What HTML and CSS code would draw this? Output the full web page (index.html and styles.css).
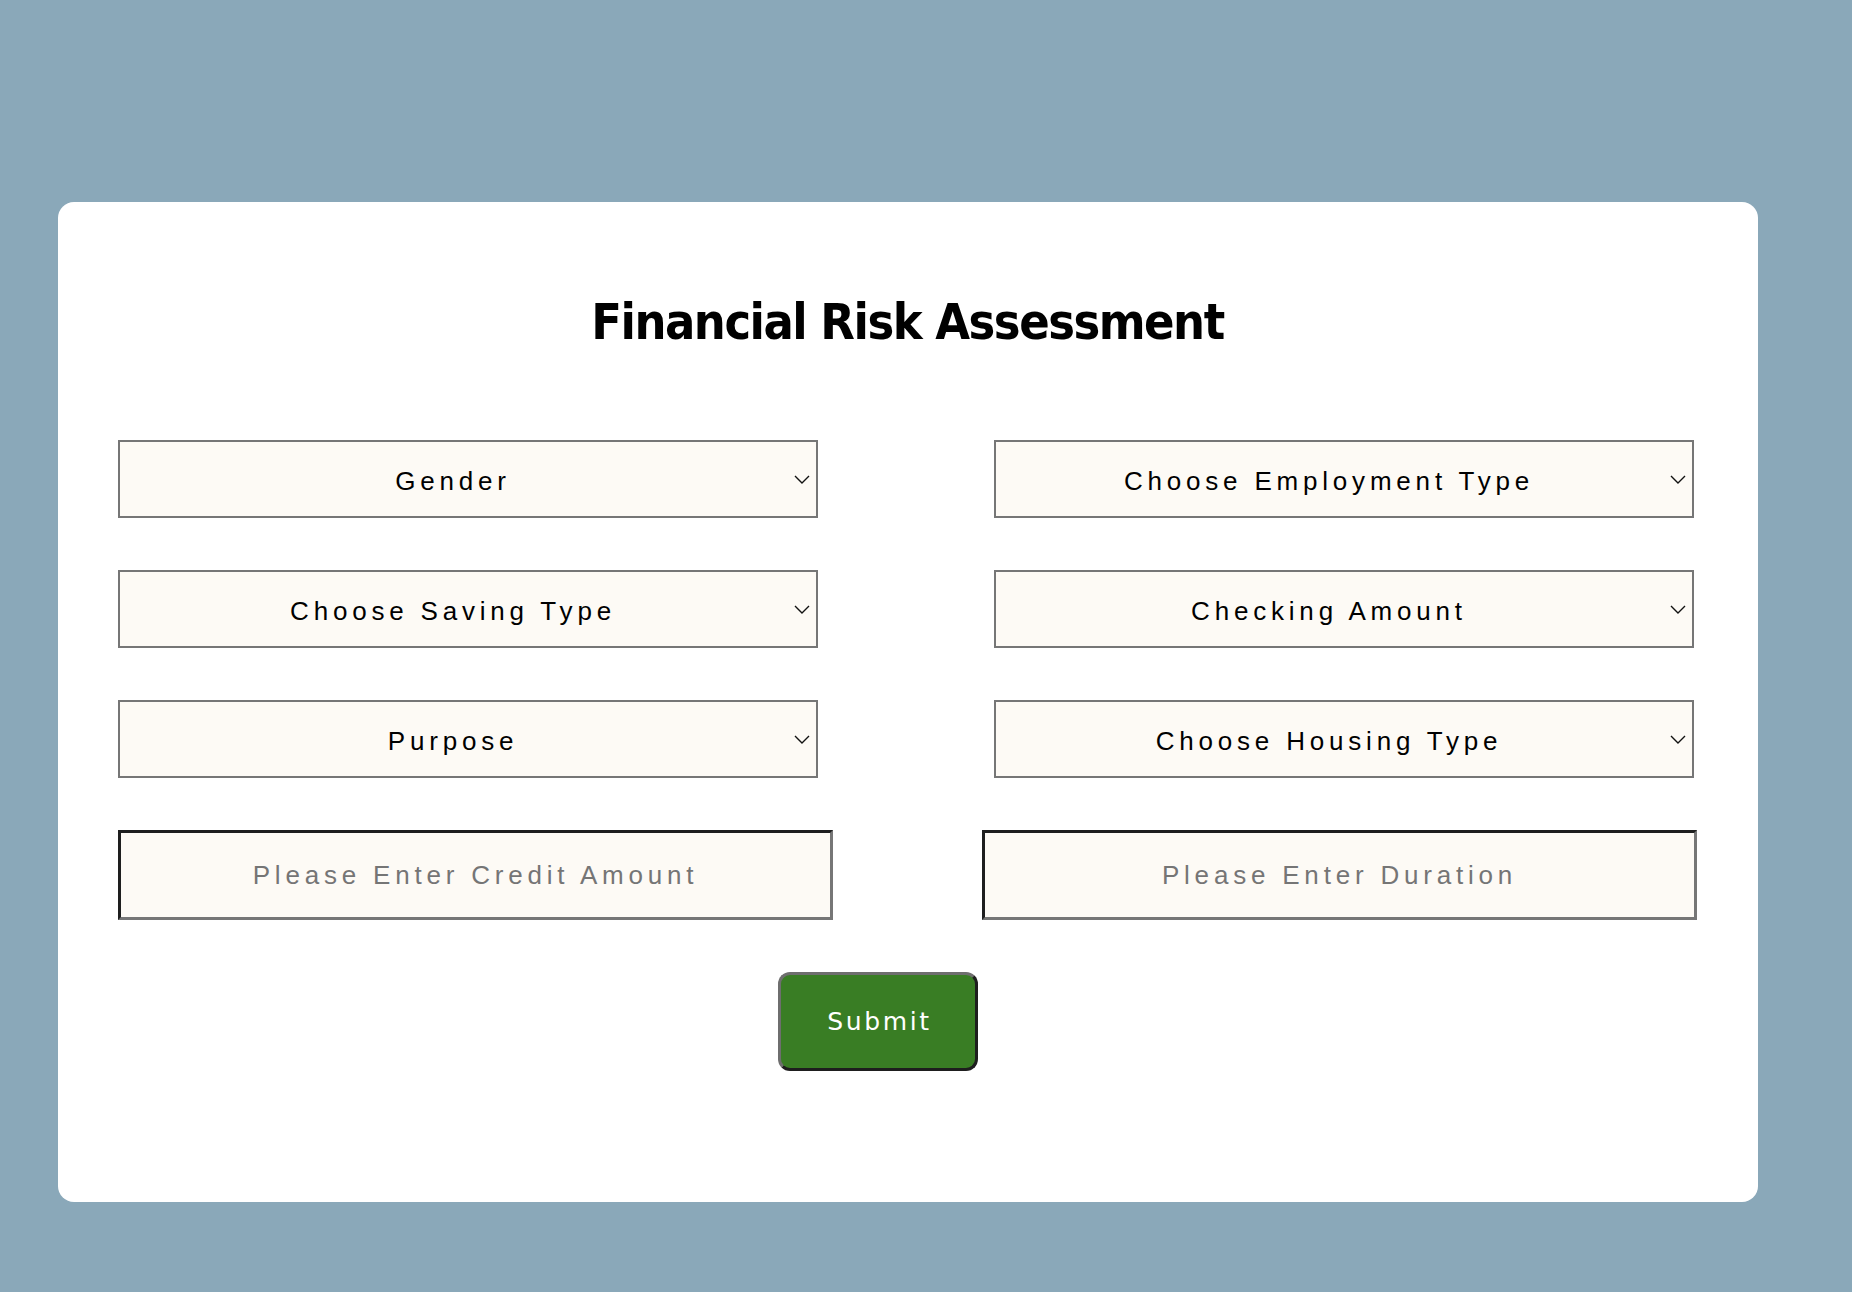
FILE: index.html
```html
<!DOCTYPE html>
<html lang="en">
<head>
<meta charset="utf-8">
<title>Financial Risk Assessment</title>
<link rel="stylesheet" href="styles.css">
</head>
<body>
<main class="card">
  <h1 class="title">Financial Risk Assessment</h1>
  <form class="form">
    <div class="field field-left">
      <select class="select"><option>Gender</option></select>
      <svg class="chev" viewBox="0 0 16 9"><path d="M1 1l7 7 7-7" fill="none" stroke="#111" stroke-width="1.4"/></svg>
    </div>
    <div class="field field-right">
      <select class="select"><option>Choose Employment Type</option></select>
      <svg class="chev" viewBox="0 0 16 9"><path d="M1 1l7 7 7-7" fill="none" stroke="#111" stroke-width="1.4"/></svg>
    </div>
    <div class="field field-left">
      <select class="select"><option>Choose Saving Type</option></select>
      <svg class="chev" viewBox="0 0 16 9"><path d="M1 1l7 7 7-7" fill="none" stroke="#111" stroke-width="1.4"/></svg>
    </div>
    <div class="field field-right">
      <select class="select"><option>Checking Amount</option></select>
      <svg class="chev" viewBox="0 0 16 9"><path d="M1 1l7 7 7-7" fill="none" stroke="#111" stroke-width="1.4"/></svg>
    </div>
    <div class="field field-left">
      <select class="select"><option>Purpose</option></select>
      <svg class="chev" viewBox="0 0 16 9"><path d="M1 1l7 7 7-7" fill="none" stroke="#111" stroke-width="1.4"/></svg>
    </div>
    <div class="field field-right">
      <select class="select"><option>Choose Housing Type</option></select>
      <svg class="chev" viewBox="0 0 16 9"><path d="M1 1l7 7 7-7" fill="none" stroke="#111" stroke-width="1.4"/></svg>
    </div>
    <input class="text-input" type="text" placeholder="Please Enter Credit Amount">
    <input class="text-input" type="text" placeholder="Please Enter Duration">
    <div class="actions">
      <button class="submit" type="button">Submit</button>
    </div>
  </form>
</main>
</body>
</html>
```
FILE: styles.css
```css
html, body {
  margin: 0;
  padding: 0;
}

body {
  background: #8aa8b9;
  padding: 202px 0 90px 58px;
  font-family: "Liberation Sans", Arial, sans-serif;
}

.card {
  width: 1700px;
  box-sizing: border-box;
  background: #ffffff;
  border-radius: 16px;
  padding: 90px 61px 131px 60px;
}

.title {
  margin: 0 0 88px 0;
  text-align: center;
  font-family: "DejaVu Sans Condensed", "DejaVu Sans", sans-serif;
  font-stretch: condensed;
  font-weight: bold;
  font-size: 50px;
  line-height: 60px;
  letter-spacing: -1.5px;
  color: #000;
}

.form {
  display: grid;
  grid-template-columns: 715px 715px;
  justify-content: space-between;
  row-gap: 52px;
}

.field {
  position: relative;
  width: 700px;
  height: 78px;
}

.field-left {
  justify-self: start;
}

.field-right {
  justify-self: end;
  margin-right: 3px;
}

.select {
  appearance: none;
  -webkit-appearance: none;
  width: 100%;
  height: 100%;
  box-sizing: border-box;
  border: 2px solid #767676;
  border-radius: 0;
  background: #fdfaf5;
  padding: 3px 30px 0 0;
  font-family: "Liberation Sans", Arial, sans-serif;
  font-size: 26px;
  letter-spacing: 4.8px;
  color: #000;
  text-align: center;
  text-align-last: center;
  outline: none;
}

.chev {
  position: absolute;
  right: 8px;
  top: 35px;
  width: 16px;
  height: 9px;
  pointer-events: none;
}

.text-input {
  width: 715px;
  height: 90px;
  box-sizing: border-box;
  border-style: solid;
  border-width: 3px;
  border-color: #1e1e1e #767676 #767676 #1e1e1e;
  background: #fdfaf5;
  font-family: "Liberation Sans", Arial, sans-serif;
  font-size: 26px;
  letter-spacing: 4.8px;
  text-align: center;
  color: #000;
  outline: none;
  padding: 0;
}

.text-input::placeholder {
  color: #757575;
}

.actions {
  grid-column: 1 / -1;
  display: flex;
  padding-left: 660px;
}

.submit {
  width: 200px;
  height: 99px;
  box-sizing: border-box;
  border-style: solid;
  border-width: 3px;
  border-color: #6e6e6e #1e1e1e #1e1e1e #6e6e6e;
  border-radius: 12px;
  background: #397d24;
  color: #ffffff;
  font-family: "DejaVu Sans", sans-serif;
  font-size: 25px;
  letter-spacing: 2.6px;
  padding: 0 0 0 3px;
  cursor: pointer;
}
```
